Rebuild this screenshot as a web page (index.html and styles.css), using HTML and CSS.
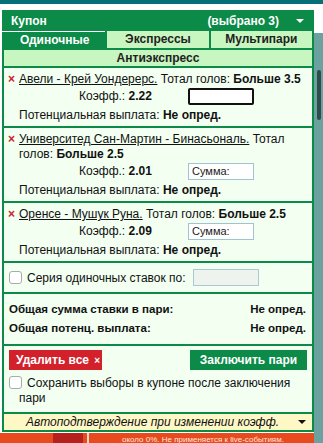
FILE: index.html
```html
<!DOCTYPE html>
<html lang="ru">
	<head>
		<meta charset="UTF-8" />
		<meta name="viewport" content="width=device-width, initial-scale=1.0" />
		<title>Купон</title>
		<link rel="stylesheet" href="styles.css">
	</head>
	<body>
		<div class="topbar"></div>
		<div class="page">
			<div class="main">
				<div class="coupon">
					<div class="head">
						<span class="head-title">Купон</span>
						<span class="head-count">(выбрано 3)</span>
						<span class="caret caret-white"></span>
					</div>
					<div class="tabs">
						<span class="tab active">Одиночные</span>
						<span class="tab">Экспрессы</span>
						<span class="tab">Мультипари</span>
					</div>
					<div class="tab tab-wide">Антиэкспресс</div>

					<div class="bet">
						<div class="bet-line">
							<span class="del">×</span>
							<span class="bet-text"><a href="#">Авели - Крей Уондерерс.</a> Тотал голов: <b>Больше 3.5</b></span>
						</div>
						<div class="odds">
							<span class="odds-label">Коэфф.: <b>2.22</b></span>
							<input class="sum focus" type="text" />
						</div>
						<div class="payout">Потенциальная выплата: <b>Не опред.</b></div>
					</div>

					<div class="bet">
						<div class="bet-line">
							<span class="del">×</span>
							<span class="bet-text"><a href="#">Университед Сан-Мартин - Бинасьональ.</a> Тотал голов: <b>Больше 2.5</b></span>
						</div>
						<div class="odds">
							<span class="odds-label">Коэфф.: <b>2.01</b></span>
							<input class="sum" type="text" placeholder="Сумма:" />
						</div>
						<div class="payout">Потенциальная выплата: <b>Не опред.</b></div>
					</div>

					<div class="bet">
						<div class="bet-line">
							<span class="del">×</span>
							<span class="bet-text"><a href="#">Оренсе - Мушук Руна.</a> Тотал голов: <b>Больше 2.5</b></span>
						</div>
						<div class="odds">
							<span class="odds-label">Коэфф.: <b>2.09</b></span>
							<input class="sum" type="text" placeholder="Сумма:" />
						</div>
						<div class="payout">Потенциальная выплата: <b>Не опред.</b></div>
					</div>

					<div class="series">
						<span class="check"></span>
						<span class="series-text">Серия одиночных ставок по:</span>
						<input class="series-input" type="text" disabled />
					</div>

					<div class="totals">
						<div class="total-row"><span>Общая сумма ставки в пари:</span><span>Не опред.</span></div>
						<div class="total-row"><span>Общая потенц. выплата:</span><span>Не опред.</span></div>
					</div>

					<div class="actions">
						<div class="buttons">
							<span class="btn btn-red">Удалить все <small>×</small></span>
							<span class="btn btn-green">Заключить пари</span>
						</div>
						<div class="keep">
							<span class="check"></span>Сохранить выборы в купоне после заключения пари
						</div>
					</div>

					<div class="auto">
						<span class="auto-text">Автоподтверждение при изменении коэфф.</span>
						<span class="caret"></span>
					</div>
				</div>
				<div class="banner">
					<span class="banner-dark"></span>
					<span class="banner-line"></span>
					<span class="banner-text">около 0%. Не применяется к live-событиям.</span>
				</div>
			</div>
			<div class="rail">
				<div class="thumb"></div>
			</div>
		</div>
	</body>
</html>
```

FILE: styles.css
```css
body {
	margin: 0;
	background: #fff;
	font-family: "Liberation Sans", Arial, sans-serif;
	font-size: 12px;
	color: #111;
}
.topbar {
	height: 4px;
	background: #05707a;
}
.page {
	display: flex;
}
.main {
	width: 314px;
}
.rail {
	width: 9px;
	margin-top: 29px;
	background: #6ba19e;
}
.thumb {
	width: 4px;
	height: 50px;
	margin: 37px 0 0 3px;
	background: #2f4c4c;
	border-radius: 2px;
}
.coupon {
	margin: 6px 0 0 2px;
	width: 308px;
	padding: 0 2px 2px;
	background: #0b8a48;
	display: flex;
	flex-direction: column;
	gap: 2px;
}
.head {
	height: 21px;
	display: flex;
	align-items: center;
	color: #fff;
	font-weight: bold;
	font-size: 12px;
	padding: 0 8px 0 7px;
}
.head-title {
	flex: 1;
}
.caret {
	width: 0;
	height: 0;
	border-left: 4px solid transparent;
	border-right: 4px solid transparent;
	border-top: 4px solid #111;
	margin-left: 17px;
}
.caret-white {
	border-top-color: #fff;
}
.tabs {
	display: flex;
	gap: 2px;
	margin-top: -2px;
}
.tab {
	flex: 1;
	height: 17px;
	line-height: 17px;
	text-align: center;
	background: #c7f6c0;
	color: #222;
	font-weight: bold;
}
.tab.active {
	background: #0b8a48;
	color: #fff;
	border-top: 1px solid #fff;
	height: 16px;
	line-height: 16px;
	margin-left: -2px;
	padding-left: 2px;
}
.tab-wide {
	flex: none;
	height: 16px;
	line-height: 16px;
}
.bet,
.series,
.totals,
.actions {
	background: #f2fff1;
}
.bet {
	padding: 4px 6px 4px 4px;
	line-height: 14px;
}
.bet-line {
	display: flex;
	line-height: 15px;
}
.del {
	flex: none;
	width: 11px;
	color: #d0202a;
	font-weight: bold;
}
.bet-text a {
	color: #111;
}
.odds {
	display: flex;
	align-items: center;
	height: 18px;
}
.odds-label {
	box-sizing: border-box;
	width: 180px;
	padding-left: 71px;
}
.sum {
	width: 66px;
	height: 17px;
	box-sizing: border-box;
	margin: 0;
	padding: 1px 3px;
	border: 1px solid #9fc2d8;
	background: #fff;
	font-family: "Liberation Sans", Arial, sans-serif;
	font-size: 11px;
	color: #111;
}
.sum::placeholder {
	color: #222;
}
.sum.focus {
	border: 2px solid #111;
	border-radius: 2px;
}
.payout {
	padding-left: 11px;
	margin-top: 3px;
}
.series {
	height: 29px;
	display: flex;
	align-items: center;
	padding-left: 5px;
}
.check {
	display: inline-block;
	flex: none;
	width: 11px;
	height: 11px;
	border: 1px solid #aaa;
	border-radius: 3px;
	background: #fff;
	vertical-align: -2px;
	margin-right: 5px;
}
.series-text {
	width: 166px;
	white-space: nowrap;
}
.series-input {
	width: 66px;
	height: 17px;
	box-sizing: border-box;
	margin: 0;
	border: 1px solid #aac8d8;
	background: #eef3ee;
}
.totals {
	padding: 6px 6px 6px 5px;
	font-weight: bold;
	font-size: 11.5px;
}
.total-row {
	display: flex;
	justify-content: space-between;
	line-height: 19px;
}
.actions {
	padding: 4px 5px 6px 5px;
}
.buttons {
	display: flex;
	justify-content: space-between;
}
.btn {
	height: 20px;
	line-height: 20px;
	color: #fff;
	font-weight: bold;
	font-size: 12px;
	padding: 0 7px;
	white-space: nowrap;
}
.btn small {
	font-size: 10px;
	margin-left: 2px;
}
.btn-red {
	width: 79px;
	background: #d2212b;
}
.btn-green {
	width: 103px;
	background: #0b8a48;
	text-align: center;
}
.keep {
	margin-top: 6px;
	line-height: 15px;
	padding-left: 10px;
	text-indent: -10px;
}
.auto {
	height: 16px;
	background: #fdf8c6;
	display: flex;
	align-items: center;
	padding: 0 6px 0 0;
	font-style: italic;
}
.auto-text {
	flex: 1;
	text-align: center;
	padding-left: 20px;
}
.banner {
	margin-top: 1px;
	height: 12px;
	background: #e74a1c;
	display: flex;
	align-items: center;
	overflow: hidden;
}
.banner-dark {
	width: 30px;
	height: 12px;
	margin-left: 53px;
	background: #b5221e;
}
.banner-line {
	width: 2px;
	height: 12px;
	margin-left: 4px;
	background: #f4d6cc;
}
.banner-text {
	margin-left: 33px;
	font-size: 8px;
	color: #fde6dc;
	white-space: nowrap;
}
```
